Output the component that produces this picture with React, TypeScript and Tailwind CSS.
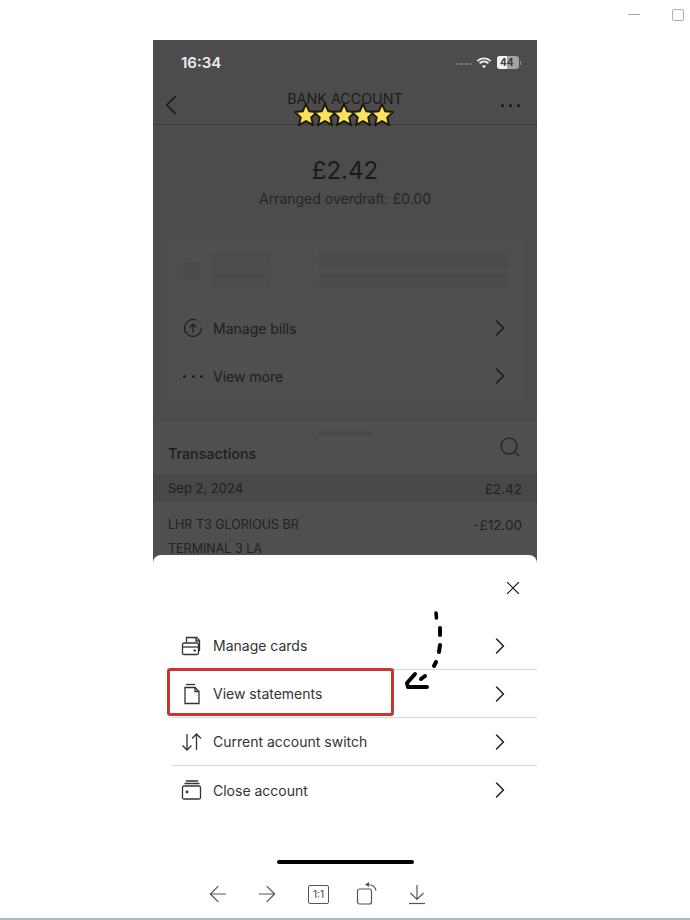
import { ChevronLeft, ChevronRight, Search, X, ArrowLeft, ArrowRight } from "lucide-react";

const font = { fontFamily: "Inter, 'Liberation Sans', sans-serif" };

function CardsIcon() {
  return (
    <svg width="22" height="22" viewBox="0 0 22 22" fill="none" stroke="#333" strokeWidth="1.3">
      <path d="M5.5 7V2.5h10l3 3V16" />
      <path d="M15 2.500V6h3.500" />
      <rect x="1.500" y="8" width="16" height="11.500" rx="1.500" />
      <path d="M1.500 12h16" />
      <path d="M12.500 15.500h2.500" strokeWidth="1.800" />
    </svg>
  );
}

function StatementIcon() {
  return (
    <svg width="22" height="22" viewBox="0 0 22 22" fill="none" stroke="#333" strokeWidth="1.3">
      <path d="M5 1.500h9" />
      <path d="M4 20.500V4.500h10l4 4v12z" />
      <path d="M14 4.500v4h4" />
    </svg>
  );
}

function SwitchIcon() {
  return (
    <svg width="22" height="22" viewBox="0 0 22 22" fill="none" stroke="#333" strokeWidth="1.3">
      <path d="M6 3v16M1.500 14.500 6 19l4.500-4.500" />
      <path d="M15.500 19V3M11 7.500 15.500 3 20 7.500" />
    </svg>
  );
}

function CloseAccountIcon() {
  return (
    <svg width="22" height="22" viewBox="0 0 22 22" fill="none" stroke="#333" strokeWidth="1.3">
      <path d="M5 2h12M3.500 4.500h15" />
      <rect x="1.500" y="7" width="18" height="13" rx="1.500" />
      <circle cx="6" cy="13" r="0.8" fill="#333" />
    </svg>
  );
}

function BillsIcon() {
  return (
    <svg width="20" height="20" viewBox="0 0 20 20" fill="none" stroke="#1f1f1f" strokeWidth="1.2">
      <path d="M13 2A8.500 8.500 0 1 0 18.500 10" />
      <path d="M10 14.500V6M6.500 9.500 10 6l3.500 3.500" />
      <path d="M15.500 3.500l.5.5M17.500 6l.3.6" />
    </svg>
  );
}

function Star() {
  return (
    <svg width="26" height="26" viewBox="0 0 24 24" className="-mx-[3.500px]">
      <path
        d="M12 1.800l3 6.800 7.300.7-5.500 4.900 1.700 7.200-6.500-3.800-6.500 3.800 1.700-7.200-5.500-4.900 7.300-.7z"
        fill="#f9e25e"
        stroke="#1d1a08"
        strokeWidth="1.800"
        strokeLinejoin="round"
      />
    </svg>
  );
}

function SheetRow({ icon, label, divider }: { icon: React.ReactNode; label: string; divider?: boolean }) {
  return (
    <div className={`ml-[19px] flex h-[48px] items-center pl-[9px] pr-[23px] ${divider ? "border-b border-[#d9d9d9]" : ""}`}>
      <div className="flex w-[22px] justify-center">{icon}</div>
      <span className="ml-[10px] flex-1 text-[14px] text-[#333]">{label}</span>
      <ChevronRight className="h-[28px] w-[28px] shrink-0 text-[#222]" strokeWidth={1.3} />
    </div>
  );
}

export default function App() {
  return (
    <div className="relative h-[920px] w-[690px] overflow-hidden bg-white" style={font}>
      {/* viewer window buttons */}
      <div className="flex h-[40px] items-start justify-end gap-[32px] pr-[6px] pt-[9px]">
        <div className="mt-[5px] h-[1px] w-[12px] bg-[#a8a8a8]" />
        <div className="h-[12px] w-[12px] rounded-[2px] border border-[#b0b0b0]" />
      </div>

      <div className="relative ml-[153px] w-[384px]">
        {/* dimmed screen */}
        <div className="h-[525px] overflow-hidden bg-[#4c4c4c]">
          <div className="flex h-[46px] items-end justify-between pb-[12px] pl-[28px] pr-[16px]">
            <span className="text-[15px] font-semibold text-[#eeeeee]">16:34</span>
            <div className="mb-[5px] flex items-center">
              <div className="mr-[4px] mt-[3px] flex gap-[1.500px]">
                <div className="h-[2.500px] w-[3px] bg-[#777]" />
                <div className="h-[2.500px] w-[3px] bg-[#777]" />
                <div className="h-[2.500px] w-[3px] bg-[#777]" />
                <div className="h-[2.500px] w-[3px] bg-[#777]" />
              </div>
              <svg width="16" height="12" viewBox="0 0 16 12" fill="#eee">
                <path d="M8 2.200c2.400 0 4.500 1 6 2.500l1.200-1.300C13.400 1.500 10.800.4 8 .4S2.600 1.500.8 3.400L2 4.700c1.500-1.500 3.600-2.500 6-2.500z" />
                <path d="M8 5.400c1.500 0 2.800.6 3.800 1.500L13 5.600C11.700 4.400 10 3.600 8 3.600s-3.700.8-5 2L4.200 6.900c1-.9 2.300-1.500 3.800-1.500z" />
                <path d="M8 8.200c-.8 0-1.500.3-2 .8l2 2.300 2-2.300c-.5-.5-1.200-.8-2-.8z" />
              </svg>
              <div className="ml-[5px] flex h-[13px] w-[22px] overflow-hidden rounded-[3px] bg-[#a3a3a3]">
                <div className="h-full w-[10px] bg-[#f2f2f2]" />
                <span className="absolute ml-[3px] text-[10px] font-bold leading-[13px] text-[#3c3c3c]">44</span>
              </div>
              <div className="ml-[1px] h-[4px] w-[1px] bg-[#888]" />
            </div>
          </div>

          <div className="relative flex h-[39px] items-center justify-between border-b border-[#3b3b3b] pl-[1px] pr-[17px]">
            <ChevronLeft className="h-[34px] w-[34px] text-[#1a1a1a]" strokeWidth={1.2} />
            <span className="absolute left-0 right-0 top-[2px] text-center text-[14.300px] text-[#1c1c1c]">BANK ACCOUNT</span>
            <div className="flex gap-[5px]">
              <div className="h-[3px] w-[3px] rounded-full bg-[#161616]" />
              <div className="h-[3px] w-[3px] rounded-full bg-[#161616]" />
              <div className="h-[3px] w-[3px] rounded-full bg-[#161616]" />
            </div>
            <div className="absolute left-[143px] top-[16px] flex">
              <Star />
              <Star />
              <Star />
              <Star />
              <Star />
            </div>
          </div>

          <div className="pt-[30px] text-center">
            <div className="text-[24px] leading-[32px] text-[#1a1a1a]">£2.42</div>
            <div className="mt-[2px] text-[14px] leading-[20px] text-[#262626]">Arranged overdraft: £0.00</div>
          </div>

          <div className="mx-[15px] mt-[29px] h-[162px] bg-[#4f4f4f] pl-[15px] pr-[15px] pt-[13px]">
            <div className="flex h-[40px] items-center">
              <div className="h-[18px] w-[16px] bg-[#4b4b4b]" />
              <div className="ml-[12px] flex h-[38px] flex-1 flex-col gap-[3px]">
                <div className="flex h-[18px]">
                  <div className="w-[60px] bg-[#4c4c4c]" />
                  <div className="w-[48px]" />
                  <div className="flex-1 bg-[#4b4b4b]" />
                </div>
                <div className="flex h-[15px]">
                  <div className="w-[60px] bg-[#4c4c4c]" />
                  <div className="w-[48px]" />
                  <div className="flex-1 bg-[#4b4b4b]" />
                </div>
              </div>
            </div>
            <div className="mt-[13px] flex h-[48px] items-center">
              <BillsIcon />
              <span className="ml-[10px] flex-1 text-[14px] text-[#1e1e1e]">Manage bills</span>
              <ChevronRight className="mr-[-7px] h-[28px] w-[28px] text-[#1a1a1a]" strokeWidth={1.3} />
            </div>
            <div className="flex h-[48px] items-center">
              <div className="flex w-[20px] justify-between">
                <div className="h-[3px] w-[3px] rounded-full bg-[#1e1e1e]" />
                <div className="h-[3px] w-[3px] rounded-full bg-[#1e1e1e]" />
                <div className="h-[3px] w-[3px] rounded-full bg-[#1e1e1e]" />
              </div>
              <span className="ml-[10px] flex-1 text-[14px] text-[#1e1e1e]">View more</span>
              <ChevronRight className="mr-[-7px] h-[28px] w-[28px] text-[#1a1a1a]" strokeWidth={1.3} />
            </div>
          </div>

          <div className="mt-[21px] bg-[#4f4f4f]">
            <div className="flex justify-center pt-[10px]">
              <div className="h-[4px] w-[54px] rounded-full bg-[#484848]" />
            </div>
            <div className="flex h-[39px] items-start justify-between pl-[15px] pr-[15px]">
              <span className="mt-[8px] text-[14.300px] font-medium text-[#1e1e1e]">Transactions</span>
              <Search className="h-[24px] w-[24px] text-[#1a1a1a]" strokeWidth={1.1} />
            </div>
            <div className="flex h-[28px] items-center justify-between bg-[#484848] pl-[15px] pr-[15px] pt-[2px] text-[13px] text-[#202020]">
              <span>Sep 2, 2024</span>
              <span className="text-[13.500px]">£2.42</span>
            </div>
            <div className="flex justify-between pl-[15px] pr-[15px] pt-[11px] text-[12.500px] leading-[24px] text-[#222]">
              <div>
                <div>LHR T3 GLORIOUS BR</div>
                <div>TERMINAL 3 LA</div>
              </div>
              <span className="text-[13.500px]">-£12.00</span>
            </div>
          </div>
        </div>

        {/* bottom sheet */}
        <div className="relative -mt-[10px] h-[325px] rounded-t-[8px] bg-white pt-[22px]">
          <div className="flex justify-end pr-[13px]">
            <X className="h-[22px] w-[22px] text-[#1f1f1f]" strokeWidth={1.2} />
          </div>
          <div className="mt-[23px]">
            <SheetRow icon={<CardsIcon />} label="Manage cards" divider />
            <SheetRow icon={<StatementIcon />} label="View statements" divider />
            <SheetRow icon={<SwitchIcon />} label="Current account switch" divider />
            <SheetRow icon={<CloseAccountIcon />} label="Close account" />
          </div>
          <div className="mx-auto mt-[46px] h-[4px] w-[137px] rounded-full bg-black" />

          {/* red highlight, hand drawn arrow */}
          <div className="absolute left-[14px] top-[113px] h-[48px] w-[227px] rounded-[3px] border-[3px] border-[#c8372f]" />
          <svg className="absolute left-[245px] top-[50px]" width="50" height="90" viewBox="0 0 50 90" fill="none" stroke="#000" strokeLinecap="round" strokeLinejoin="round">
            <path d="M38 8l.5 5" strokeWidth="3.500" />
            <path d="M42 23v7" strokeWidth="4" />
            <path d="M42 40l-1 7" strokeWidth="4" />
            <path d="M38 57l-2 4" strokeWidth="4" />
            <path d="M27 71l-4 3" strokeWidth="4" />
            <path d="M17 69l-8 9 1 4 19 0" strokeWidth="4" />
          </svg>
        </div>
      </div>

      {/* viewer toolbar */}
      <div className="absolute bottom-[13px] left-[205px] flex h-[26px] items-center text-[#555]">
        <ArrowLeft className="h-[26px] w-[26px]" strokeWidth={1.1} />
        <ArrowRight className="ml-[23px] h-[26px] w-[26px]" strokeWidth={1.1} />
        <div className="ml-[28px] flex h-[19px] w-[21px] items-center justify-center rounded-[2px] border border-[#555] text-[10px] text-[#444]">1:1</div>
        <svg className="ml-[26px]" width="24" height="24" viewBox="0 0 24 24" fill="none" stroke="#555" strokeWidth="1.200">
          <rect x="2.500" y="7" width="14" height="15" rx="2" />
          <path d="M12 2.500c4 0 8 1.500 9 6" />
          <path d="M14 0l-4 2.500 4 2.500z" fill="#555" stroke="none" />
        </svg>
        <svg className="ml-[29px]" width="18" height="22" viewBox="0 0 18 22" fill="none" stroke="#555" strokeWidth="1.200">
          <path d="M9 2v14M2.500 10 9 16.500 15.500 10" />
          <path d="M1 20.500h16" />
        </svg>
      </div>
      <div className="absolute bottom-0 left-0 right-0 h-[2px] bg-[#a9bdbd]" />
    </div>
  );
}
